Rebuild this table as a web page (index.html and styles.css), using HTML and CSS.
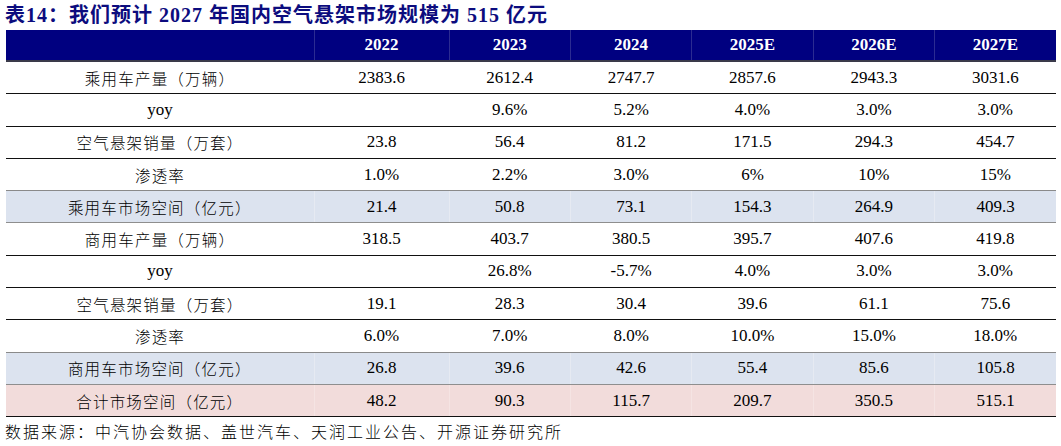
FILE: index.html
```html
<!DOCTYPE html>
<html lang="zh">
<head>
<meta charset="utf-8">
<link rel="stylesheet" href="styles.css">
</head>
<body>
<div class="page">
  <h1 class="title">表14：我们预计 2027 年国内空气悬架市场规模为 515 亿元</h1>
  <table class="data">
    <colgroup>
      <col class="c-label"><col class="c-first"><col class="c-year"><col class="c-year"><col class="c-year"><col class="c-year"><col class="c-year">
    </colgroup>
    <thead>
      <tr><th></th><th>2022</th><th>2023</th><th>2024</th><th>2025E</th><th>2026E</th><th>2027E</th></tr>
    </thead>
    <tbody>
      <tr><td class="lbl">乘用车产量（万辆）</td><td>2383.6</td><td>2612.4</td><td>2747.7</td><td>2857.6</td><td>2943.3</td><td>3031.6</td></tr>
      <tr><td class="lbl num">yoy</td><td></td><td>9.6%</td><td>5.2%</td><td>4.0%</td><td>3.0%</td><td>3.0%</td></tr>
      <tr><td class="lbl">空气悬架销量（万套）</td><td>23.8</td><td>56.4</td><td>81.2</td><td>171.5</td><td>294.3</td><td>454.7</td></tr>
      <tr class="pre"><td class="lbl">渗透率</td><td>1.0%</td><td>2.2%</td><td>3.0%</td><td>6%</td><td>10%</td><td>15%</td></tr>
      <tr class="blue"><td class="lbl">乘用车市场空间（亿元）</td><td>21.4</td><td>50.8</td><td>73.1</td><td>154.3</td><td>264.9</td><td>409.3</td></tr>
      <tr><td class="lbl">商用车产量（万辆）</td><td>318.5</td><td>403.7</td><td>380.5</td><td>395.7</td><td>407.6</td><td>419.8</td></tr>
      <tr><td class="lbl num">yoy</td><td></td><td>26.8%</td><td>-5.7%</td><td>4.0%</td><td>3.0%</td><td>3.0%</td></tr>
      <tr><td class="lbl">空气悬架销量（万套）</td><td>19.1</td><td>28.3</td><td>30.4</td><td>39.6</td><td>61.1</td><td>75.6</td></tr>
      <tr class="pre"><td class="lbl">渗透率</td><td>6.0%</td><td>7.0%</td><td>8.0%</td><td>10.0%</td><td>15.0%</td><td>18.0%</td></tr>
      <tr class="blue"><td class="lbl">商用车市场空间（亿元）</td><td>26.8</td><td>39.6</td><td>42.6</td><td>55.4</td><td>85.6</td><td>105.8</td></tr>
      <tr class="pink"><td class="lbl">合计市场空间（亿元）</td><td>48.2</td><td>90.3</td><td>115.7</td><td>209.7</td><td>350.5</td><td>515.1</td></tr>
    </tbody>
  </table>
  <p class="source">数据来源：中汽协会数据、盖世汽车、天润工业公告、开源证券研究所</p>
</div>
</body>
</html>
```

FILE: styles.css
```css
html, body {
  margin: 0;
  padding: 0;
  background: #ffffff;
}

.page {
  padding: 0 5px 0 5px;
  font-family: "Liberation Serif", "Noto Sans CJK SC", serif;
  color: #000;
}

.title {
  margin: 0;
  height: 30px;
  line-height: 30px;
  font-size: 20px;
  font-weight: bold;
  color: #0c0c7e;
  white-space: nowrap;
  letter-spacing: 1px;
}

.data {
  margin-left: 1px;
  width: 1050px;
  border-collapse: collapse;
  table-layout: fixed;
}

.c-label { width: 308px; }
.c-first { width: 135px; }
.c-year { width: 121.4px; }

.data th {
  background: #000080;
  color: #ffffff;
  font-family: "Liberation Serif", serif;
  font-weight: bold;
  font-size: 17px;
  height: 30px;
  padding: 0;
  text-align: center;
  border-left: 1px solid #2b2b92;
  border-bottom: 2px solid #3a3a4a;
}

.data th:first-child {
  border-left: none;
}

.data td {
  height: 31.3px;
  padding: 0;
  text-align: center;
  font-size: 17px;
  font-family: "Liberation Serif", serif;
  border-bottom: 1px solid #111;
}

.data td.lbl {
  font-family: "Noto Sans CJK SC", sans-serif;
  font-size: 15.5px;
  letter-spacing: 1.2px;
  font-weight: 300;
}

.data td.lbl.num {
  font-family: "Liberation Serif", serif;
  font-size: 17px;
  font-weight: normal;
  letter-spacing: 0;
}

.data tr.pre td {
  border-bottom: 1px solid #8a8a8a;
}

.data tr.blue td {
  background: #dce3ef;
  border-bottom: 1px solid #8e8e8e;
  border-left: 1px solid #e6eaf2;
}

.data tr.pink td {
  background: #f2dcdb;
  border-bottom: 1px solid #111;
  border-left: 1px solid #f5e4e3;
}

.data tr.blue td:first-child,
.data tr.pink td:first-child {
  border-left: none;
}

.source {
  margin: 0;
  padding-top: 4px;
  font-family: "Noto Sans CJK SC", sans-serif;
  font-weight: 300;
  font-size: 16px;
  letter-spacing: 2px;
  line-height: 20px;
  white-space: nowrap;
}
```
